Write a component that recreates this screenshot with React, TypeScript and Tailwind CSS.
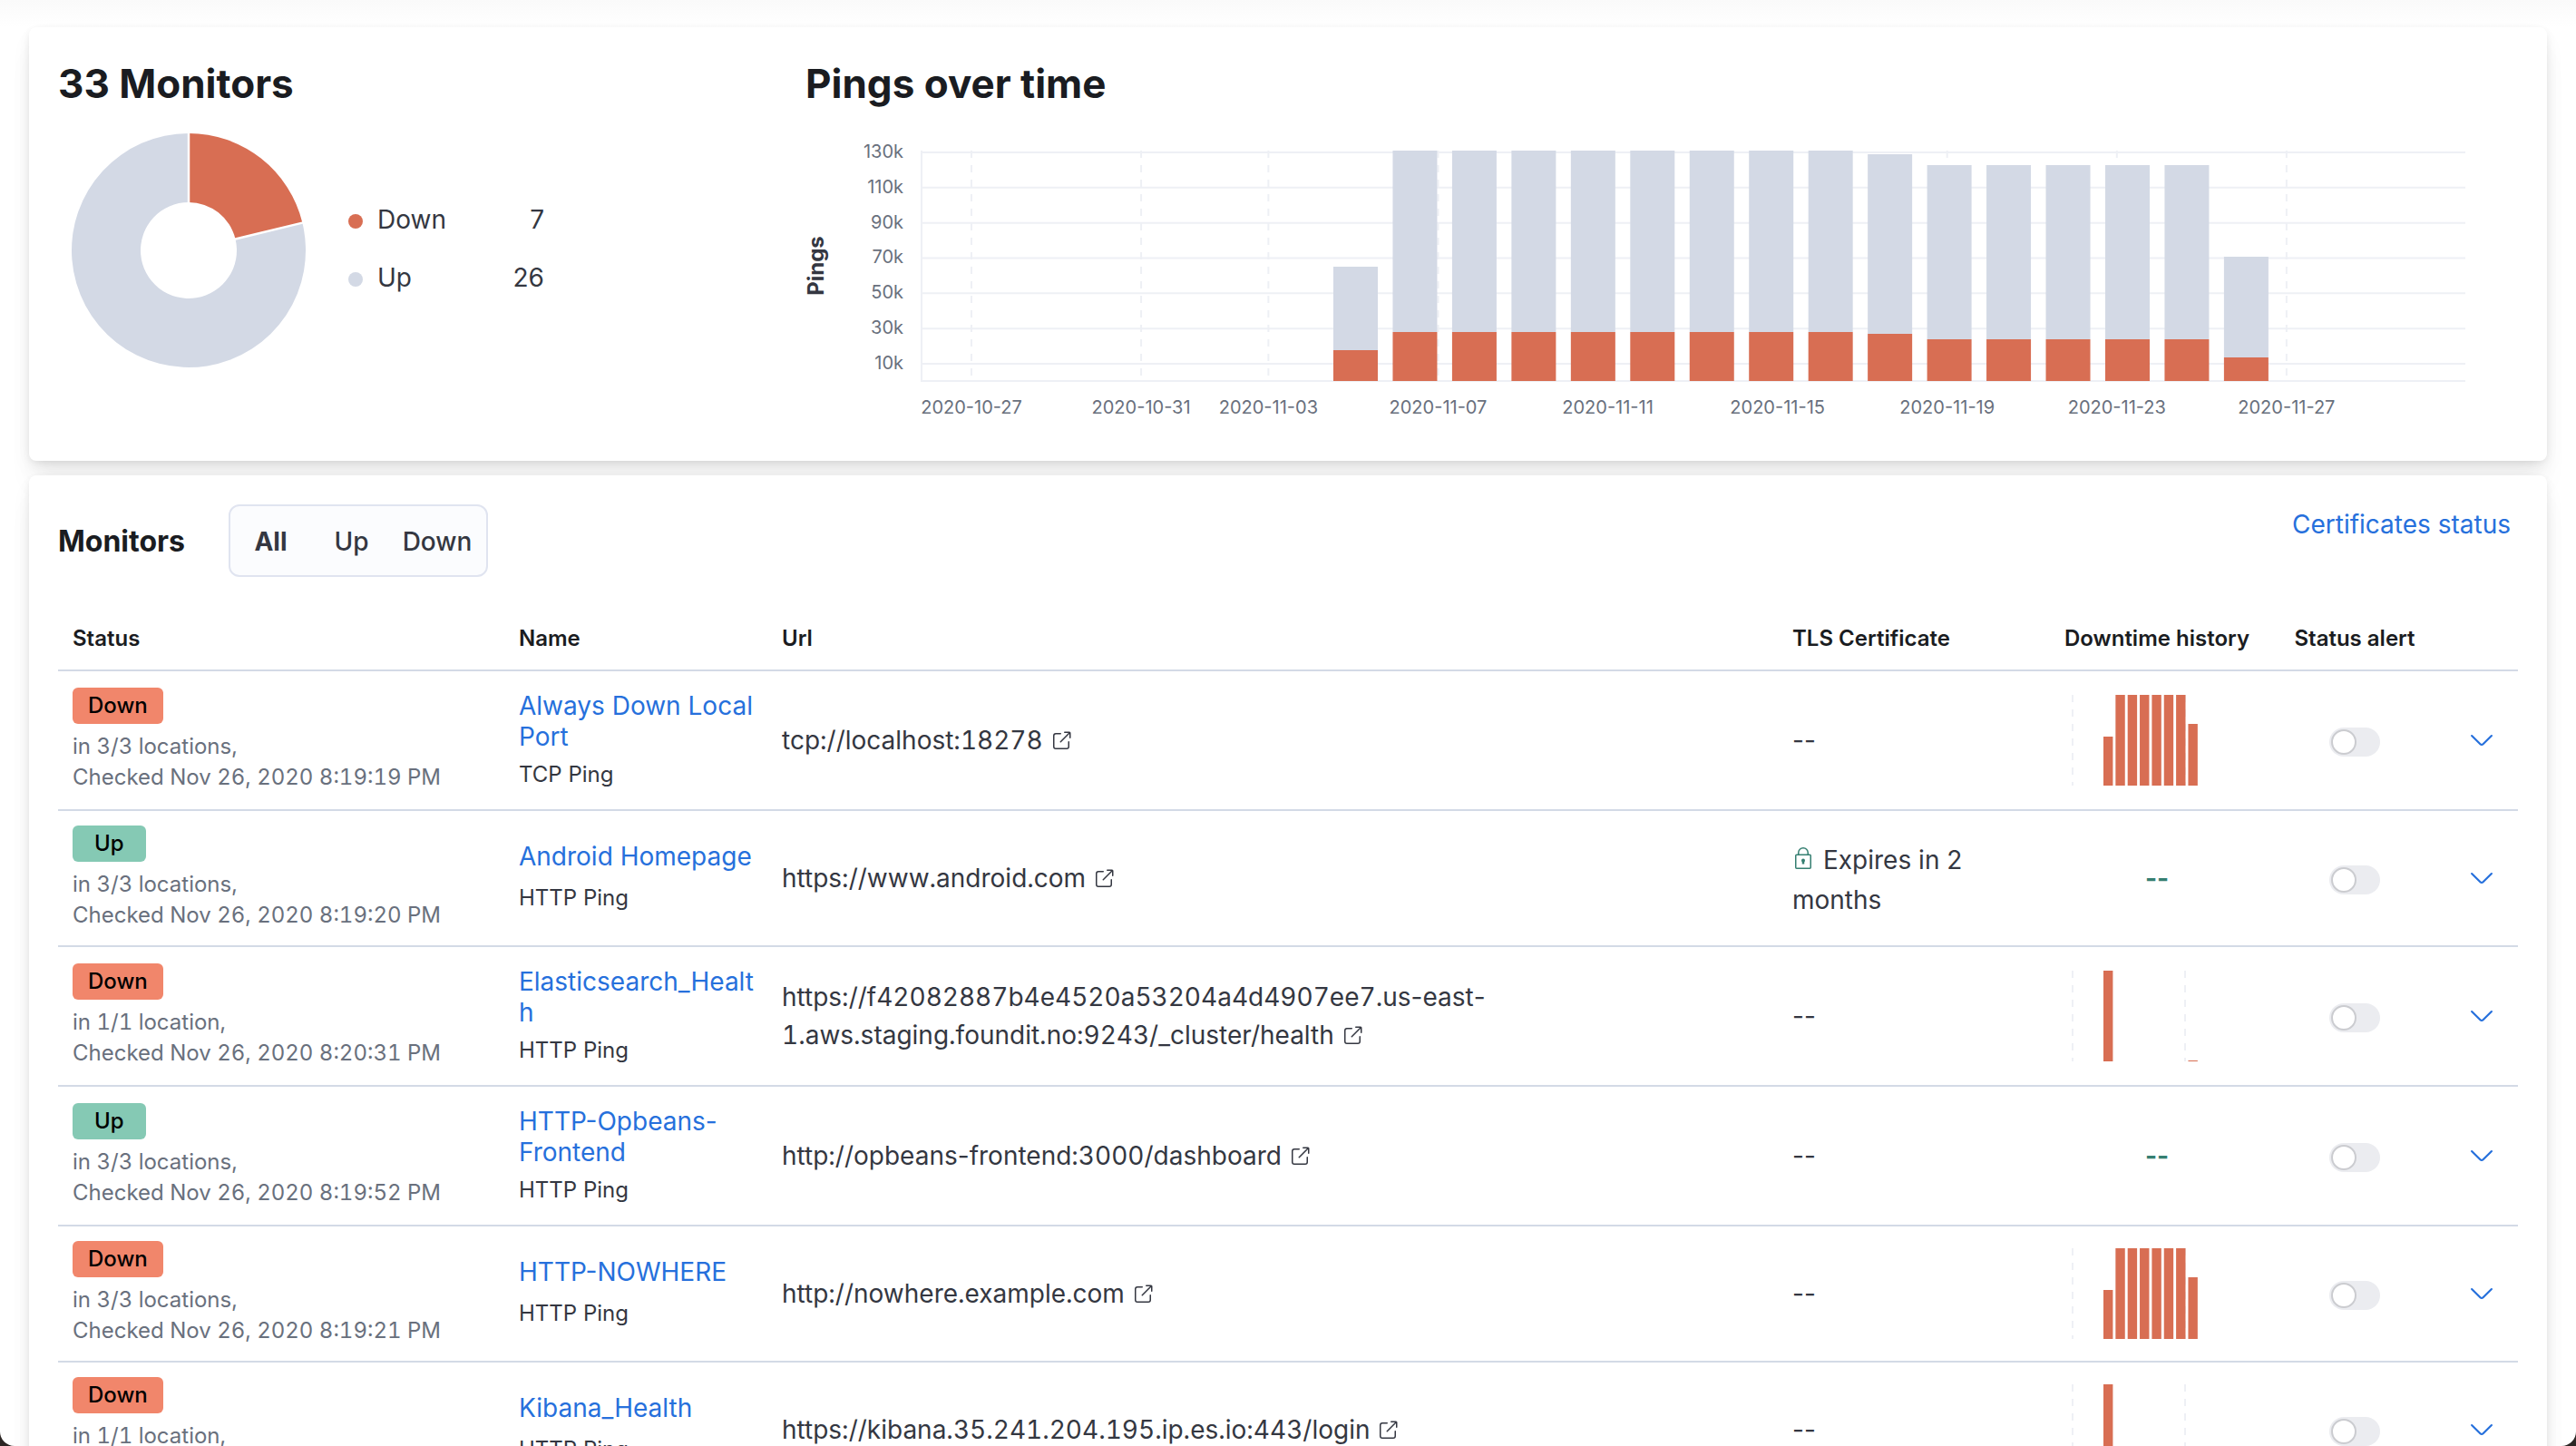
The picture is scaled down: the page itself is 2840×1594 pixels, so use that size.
import React from "react";

const DOWN = "#d86e53";
const UP = "#d3d9e5";
const GRID = "#eef0f5";

type Spark = { at: number; height: number }[];

const busySpark: Spark = [54, 100, 100, 100, 100, 100, 100, 68].map((height, at) => ({ at, height }));
const quietSpark: Spark = [
  { at: 0, height: 100 },
  { at: 7, height: 1 },
];

type Monitor = {
  up: boolean;
  locations: string;
  checked: string;
  name: string;
  wraps?: boolean;
  kind: string;
  url: [string, string?];
  tls?: string;
  spark?: Spark;
};

const monitors: Monitor[] = [
  { up: false, locations: "in 3/3 locations,", checked: "Checked Nov 26, 2020 8:19:19 PM", name: "Always Down Local Port", wraps: true, kind: "TCP Ping", url: ["tcp://localhost:18278"], spark: busySpark },
  { up: true, locations: "in 3/3 locations,", checked: "Checked Nov 26, 2020 8:19:20 PM", name: "Android Homepage", kind: "HTTP Ping", url: ["https://www.android.com"], tls: "Expires in 2 months" },
  { up: false, locations: "in 1/1 location,", checked: "Checked Nov 26, 2020 8:20:31 PM", name: "Elasticsearch_Health", wraps: true, kind: "HTTP Ping", url: ["https://f42082887b4e4520a53204a4d4907ee7.us-east-", "1.aws.staging.foundit.no:9243/_cluster/health"], spark: quietSpark },
  { up: true, locations: "in 3/3 locations,", checked: "Checked Nov 26, 2020 8:19:52 PM", name: "HTTP-Opbeans-Frontend", wraps: true, kind: "HTTP Ping", url: ["http://opbeans-frontend:3000/dashboard"] },
  { up: false, locations: "in 3/3 locations,", checked: "Checked Nov 26, 2020 8:19:21 PM", name: "HTTP-NOWHERE", kind: "HTTP Ping", url: ["http://nowhere.example.com"], spark: busySpark },
  { up: false, locations: "in 1/1 location,", checked: "Checked Nov 26, 2020 8:20:31 PM", name: "Kibana_Health", kind: "HTTP Ping", url: ["https://kibana.35.241.204.195.ip.es.io:443/login"], spark: quietSpark },
];

function PopoutIcon() {
  return (
    <svg viewBox="0 0 16 16" className="ml-2 inline-block size-6 align-[-3px]" fill="currentColor" aria-hidden="true">
      <path d="M13 8.5a.5.5 0 1 1 1 0V12a2 2 0 0 1-2 2H4a2 2 0 0 1-2-2V4a2 2 0 0 1 2-2h3.5a.5.5 0 0 1 0 1H4a1 1 0 0 0-1 1v8a1 1 0 0 0 1 1h8a1 1 0 0 0 1-1V8.5zm-5.12.339a.5.5 0 1 1-.706-.707L13.305 2H10.5a.5.5 0 1 1 0-1H14a1 1 0 0 1 1 1v3.5a.5.5 0 1 1-1 0V2.72L7.88 8.838z" />
    </svg>
  );
}

function LockIcon() {
  return (
    <svg viewBox="0 0 28 28" className="mr-1.5 inline-block size-7 align-[-3px] text-[#357f71]" fill="none" stroke="currentColor" strokeWidth="1.5" aria-hidden="true">
      <rect x="3.75" y="9.25" width="16.5" height="15" rx="1" />
      <path d="M6.75 9.25V7a5.25 5.25 0 0 1 10.5 0v2.25" />
      <circle cx="12" cy="15.5" r="2" fill="currentColor" stroke="none" />
      <path d="M12 15.5v4" strokeWidth="2.5" />
    </svg>
  );
}

function ArrowDownIcon() {
  return (
    <svg viewBox="0 0 16 16" className="size-8" fill="currentColor" aria-hidden="true">
      <path d="M13.069 5.157L8.384 9.768a.546.546 0 01-.768 0L2.93 5.158a.552.552 0 00-.771 0 .53.53 0 000 .759l4.684 4.61c.641.631 1.672.63 2.312 0l4.684-4.61a.53.53 0 000-.76.552.552 0 00-.771 0z" />
    </svg>
  );
}

function Donut() {
  const R = 129;
  const r = 53;
  const a = (7 / 33) * Math.PI * 2;
  const pt = (rad: number, t: number) => `${130 + rad * Math.sin(t)} ${130 - rad * Math.cos(t)}`;
  return (
    <svg viewBox="0 0 260 260" className="size-[260px]" role="img" aria-label="7 monitors down, 26 up">
      <path d={`M${pt(R, a)}A${R} ${R} 0 1 1 ${pt(R, 0)}L${pt(r, 0)}A${r} ${r} 0 1 0 ${pt(r, a)}Z`} fill={UP} />
      <path d={`M${pt(R, 0)}A${R} ${R} 0 0 1 ${pt(R, a)}L${pt(r, a)}A${r} ${r} 0 0 0 ${pt(r, 0)}Z`} fill={DOWN} />
      <path d={`M${pt(R + 1, 0)}L${pt(r - 1, 0)}M${pt(R + 1, a)}L${pt(r - 1, a)}`} stroke="#fff" strokeWidth="2.5" />
    </svg>
  );
}

const pingBars: [number, number][] = [
  [126, 34],
  ...Array.from({ length: 8 }, (): [number, number] => [254, 54]),
  [250, 52],
  ...Array.from({ length: 5 }, (): [number, number] => [238, 46]),
  [137, 26],
];
const dates: [string, number][] = [
  ["2020-10-27", 0],
  ["2020-10-31", 4],
  ["2020-11-03", 7],
  ["2020-11-07", 11],
  ["2020-11-11", 15],
  ["2020-11-15", 19],
  ["2020-11-19", 23],
  ["2020-11-23", 27],
  ["2020-11-27", 31],
];

function PingsChart() {
  const dayX = (d: number) => 183 + d * 46.77;
  return (
    <svg viewBox="0 0 1888 356" className="block w-full overflow-visible" fontFamily="Inter, sans-serif" role="img" aria-label="Pings over time">
      <g stroke={GRID} strokeWidth="2">
        {[130, 110, 90, 70, 50, 30, 10].map((k, i) => (
          <path key={k} d={`M128 ${46 + i * 38.83}H1830`} />
        ))}
        {dates.map(([label, d]) => (
          <path key={label} d={`M${dayX(d)} 44V298`} strokeDasharray="8 8" />
        ))}
        <path d="M128 44V298H1830" fill="none" />
      </g>
      {[130, 110, 90, 70, 50, 30, 10].map((k, i) => (
        <text key={k} x="108" y={52 + i * 38.83} textAnchor="end" fontSize="20" fill="#69707d">
          {k}k
        </text>
      ))}
      {pingBars.map(([total, down], i) => (
        <g key={i}>
          <rect x={582 + i * 65.46} y={298 - total} width="49" height={total - down} fill={UP} />
          <rect x={582 + i * 65.46} y={298 - down} width="49" height={down} fill={DOWN} />
        </g>
      ))}
      {dates.map(([label, d]) => (
        <text key={label} x={dayX(d)} y="334" textAnchor="middle" fontSize="20" fill="#69707d">
          {label}
        </text>
      ))}
      <text transform="translate(20 171) rotate(-90)" textAnchor="middle" fontSize="24" fontWeight="700" fill="#343741">
        Pings
      </text>
    </svg>
  );
}

function Sparkline({ data }: { data: Spark }) {
  return (
    <svg viewBox="0 0 200 100" className="mx-auto block h-[100px] w-[200px]" role="img" aria-label="Downtime history">
      <path d="M7 0V100M131 0V100" stroke={GRID} strokeWidth="2" strokeDasharray="8 8" />
      {data.map(({ at, height }) => (
        <rect key={at} x={41 + at * 13.35} y={100 - height} width="10.4" height={height} fill={DOWN} />
      ))}
    </svg>
  );
}

function LegendRow({ color, label, value }: { color: string; label: string; value: number }) {
  return (
    <li className="flex items-center leading-8">
      <span className={`mt-1 mr-4 size-4 rounded-full ${color}`} />
      <span>{label}</span>
      <span className="ml-auto">{value}</span>
    </li>
  );
}

// Digits are tabular, while hyphens keep their proportional width.
function TabularText({ text }: { text: string }) {
  return (
    <>
      {text.split(/(-)/).map((part, i) =>
        part === "-" ? (
          <span key={i}>-</span>
        ) : (
          <span key={i} className="tabular-nums">
            {part}
          </span>
        ),
      )}
    </>
  );
}

function MonitorRow({ m, index }: { m: Monitor; index: number }) {
  return (
    <tr className={`border-b-2 border-[#d3dae6] ${m.wraps ? "h-[154px]" : "h-[150px]"}`}>
      <td className="px-4">
        <span className={`flex h-10 w-fit items-center rounded-md text-2xl font-medium text-black ${m.up ? "bg-[#85c9b4] px-6" : "bg-[#f1866b] px-[17px]"}`}>
          {m.up ? "Up" : "Down"}
        </span>
        <div className="mt-2 text-2xl leading-[34px] text-[#69707d] tabular-nums">
          <div>{m.locations}</div>
          <div>{m.checked}</div>
        </div>
      </td>
      <td className="pr-3 pl-4">
        <a href={`#monitor-${index}`} className="block leading-[34px] break-words text-[#2670dc]">
          {m.name}
        </a>
        <div className={`text-2xl leading-[34px] ${m.wraps ? "mt-2" : "mt-3 mb-0.5"}`}>{m.kind}</div>
      </td>
      <td className="px-4">
        <a href={m.url.join("")} className="leading-[42px]">
          <TabularText text={m.url[0]} />
          {m.url[1] && (
            <>
              <wbr />
              <TabularText text={m.url[1]} />
            </>
          )}
          <PopoutIcon />
        </a>
      </td>
      <td className={`px-4 leading-11 ${m.tls ? "pt-1" : ""}`}>
        {m.tls ? (
          <>
            <LockIcon />
            {m.tls}
          </>
        ) : (
          "--"
        )}
      </td>
      <td className="text-center">
        {m.spark ? <Sparkline data={m.spark} /> : <span className="font-bold text-[#357f71]">--</span>}
      </td>
      <td>
        <label className="mx-auto mt-1 flex h-8 w-14 cursor-pointer items-center rounded-full bg-[#ebecf0] p-0.5 has-checked:justify-end has-checked:bg-[#2670dc]">
          <input type="checkbox" aria-label={`Status alert for ${m.name}`} className="size-7 appearance-none rounded-full border-2 border-[#cbccd0] bg-white" />
        </label>
      </td>
      <td>
        <button aria-label={`Expand ${m.name}`} className="flex w-full justify-center text-[#2670dc]">
          <ArrowDownIcon />
        </button>
      </td>
    </tr>
  );
}

const card =
  "rounded-lg bg-white px-8 shadow-[0_2px_8px_-2px_rgba(0,0,0,0.08),0_5px_16px_-2px_rgba(0,0,0,0.06),0_11px_24px_-2px_rgba(0,0,0,0.05),0_30px_30px_-2px_rgba(0,0,0,0.04)]";

export default function App() {
  const [filter, setFilter] = React.useState("All");
  return (
    <div className="h-screen bg-[#2c2624]">
      <main className="flex h-full flex-col gap-4 overflow-hidden rounded-b-2xl bg-white bg-linear-to-b from-[#fafafa] to-white to-[30px] px-8 pt-[30px] font-['Inter',sans-serif] text-[28px] text-[#343741]">
        <section className={`${card} flex shrink-0 pt-8 pb-[30px]`}>
          <div className="w-[824px] shrink-0">
            <h1 className="text-[44px] leading-[60px] font-bold text-[#1a1c21]">33 Monitors</h1>
            <div className="mt-6 ml-3.5 flex items-center">
              <Donut />
              <ul className="mb-1 ml-[46px] flex w-[216px] flex-col gap-8">
                <LegendRow color="bg-[#d86e53]" label="Down" value={7} />
                <LegendRow color="bg-[#d3d9e5]" label="Up" value={26} />
              </ul>
            </div>
          </div>
          <div className="min-w-0 flex-1">
            <h2 className="text-[44px] leading-[60px] font-bold text-[#1a1c21]">Pings over time</h2>
            <PingsChart />
          </div>
        </section>

        <section className={`${card} shrink-0 pt-8`}>
          <header className="flex h-20 items-start">
            <h2 className="text-[32px] leading-[82px] font-bold text-[#1a1c21]">Monitors</h2>
            <div className="ml-12 flex h-20 rounded-xl border-2 border-[#e0e4f0] bg-[#fbfcfe] pr-1">
              {["All", "Up", "Down"].map((f) => (
                <button
                  key={f}
                  aria-pressed={f === filter}
                  onClick={() => setFilter(f)}
                  className={`pt-0.5 ${f === "Down" ? "w-[100px]" : "w-[89px]"} ${f === filter ? "font-bold" : "font-medium"}`}
                >
                  {f}
                </button>
              ))}
            </div>
            <a href="#certificates" className="mr-2 ml-auto leading-11 text-[#2670dc]">
              Certificates status
            </a>
          </header>
          <table className="mt-8 w-full table-fixed border-collapse">
            <colgroup>
              <col className="w-[492px]" />
              <col className="w-[290px]" />
              <col />
              <col className="w-[300px]" />
              <col className="w-[236px]" />
              <col className="w-[200px]" />
              <col className="w-20" />
            </colgroup>
            <thead>
              <tr className="h-[71px] border-b-2 border-[#d3dae6] text-left text-2xl text-[#1a1c21]">
                <th className="px-4 pt-0.5 font-semibold">Status</th>
                <th className="px-4 pt-0.5 font-semibold">Name</th>
                <th className="px-4 pt-0.5 font-semibold">Url</th>
                <th className="px-4 pt-0.5 font-semibold">TLS Certificate</th>
                <th className="pt-0.5 text-center font-semibold">Downtime history</th>
                <th className="pt-0.5 text-center font-semibold">Status alert</th>
                <td />
              </tr>
            </thead>
            <tbody>
              {monitors.map((m, i) => (
                <MonitorRow key={m.name} m={m} index={i} />
              ))}
            </tbody>
          </table>
        </section>
      </main>
    </div>
  );
}
